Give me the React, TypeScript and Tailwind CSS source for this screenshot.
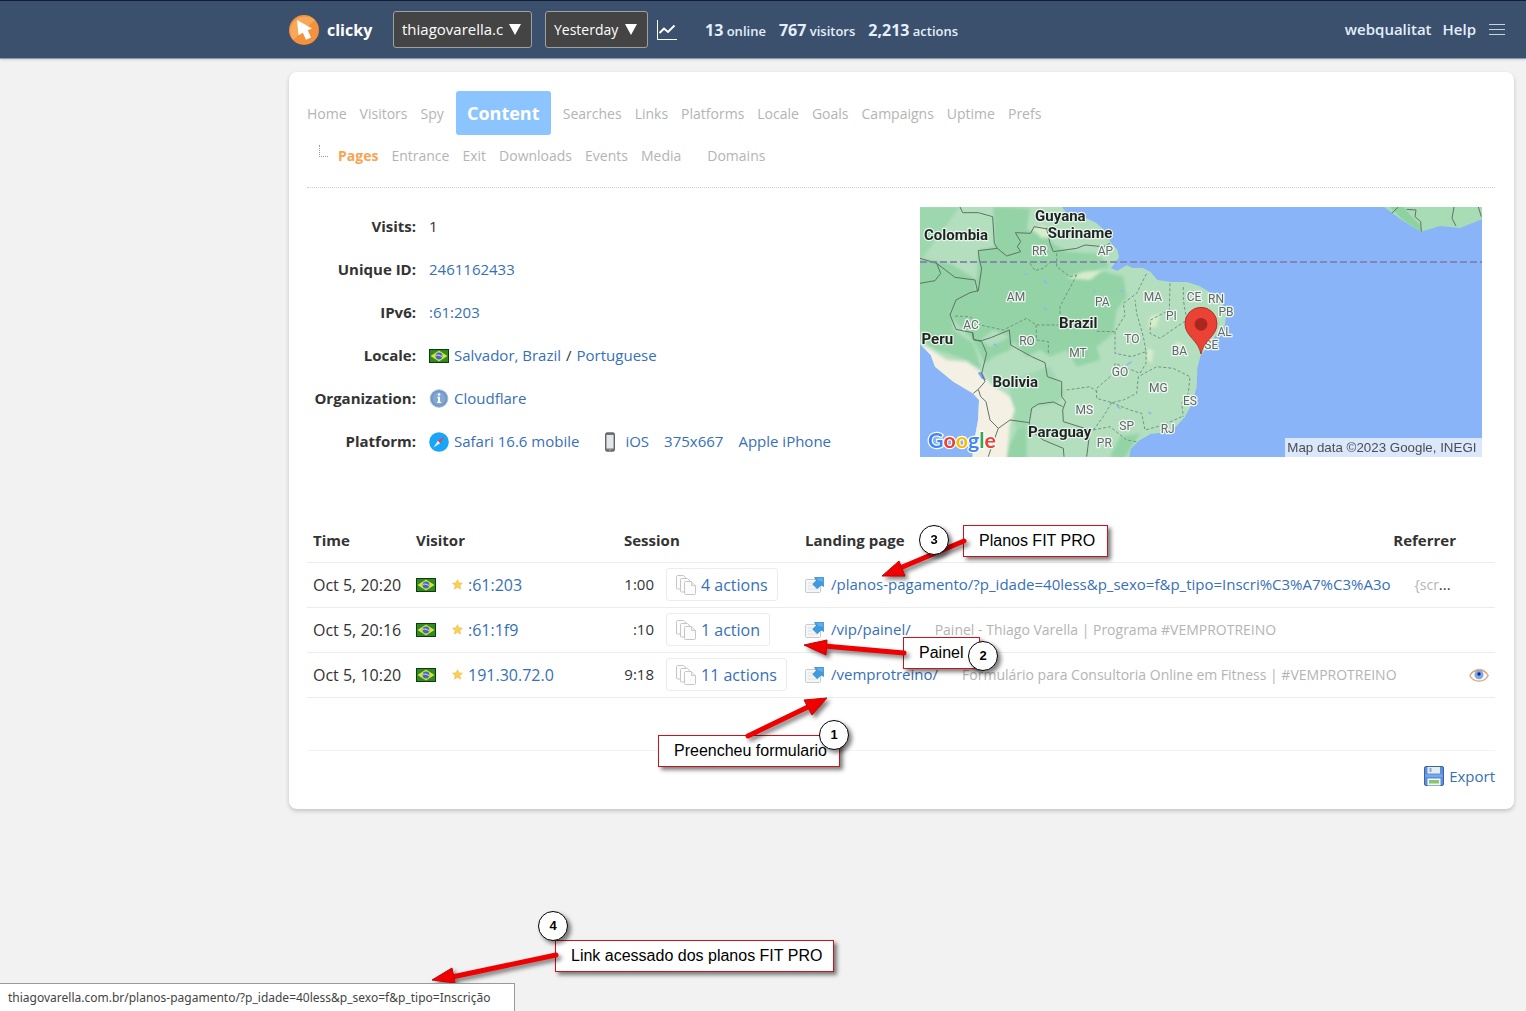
import { ReactNode } from "react";

type Visit = {
    time: string;
    visitor: string;
    session: string;
    actions: string;
    page: string;
    title: string;
    cut?: boolean;
    watched?: boolean;
};

const visits: Visit[] = [
    {
        time: "Oct 5, 20:20",
        visitor: ":61:203",
        session: "1:00",
        actions: "4 actions",
        page: "/planos-pagamento/?p_idade=40less&p_sexo=f&p_tipo=Inscri%C3%A7%C3%A3o",
        title: "{scr",
        cut: true,
    },
    {
        time: "Oct 5, 20:16",
        visitor: ":61:1f9",
        session: ":10",
        actions: "1 action",
        page: "/vip/painel/",
        title: "Painel - Thiago Varella | Programa #VEMPROTREINO",
    },
    {
        time: "Oct 5, 10:20",
        visitor: "191.30.72.0",
        session: "9:18",
        actions: "11 actions",
        page: "/vemprotreino/",
        title: "Formulário para Consultoria Online em Fitness | #VEMPROTREINO",
        watched: true,
    },
];

const tabsAfter = ["Searches", "Links", "Platforms", "Locale", "Goals", "Campaigns", "Uptime", "Prefs"];

const Flag = () => (
    <svg className="h-[14px] w-5 shrink-0" viewBox="0 0 20 14" role="img" aria-label="Brazil">
        <rect width="20" height="14" fill="#0c3d10" />
        <rect x="1" y="1" width="18" height="12" fill="#2f8a22" />
        <path d="M10 1.500 18.500 7 10 12.500 1.500 7Z" fill="#d9e03c" />
        <circle cx="10" cy="7" r="3.400" fill="#4468c8" />
        <path d="M7 6.300c2-.6 4.300 0 6 1.400" stroke="#dbe6f6" strokeWidth="1" fill="none" />
    </svg>
);

const Star = () => (
    <svg className="h-[11px] w-[11px] shrink-0" viewBox="0 0 12 12" aria-hidden="true">
        <path d="M6 .8 7.600 4.200 11.400 4.600 8.600 7.200 9.300 11 6 9.100 2.700 11 3.400 7.200 .6 4.600 4.400 4.200Z" fill="#fbd04e" stroke="#eebc58" strokeWidth=".7" />
    </svg>
);

const PagesIcon = () => (
    <svg className="h-5 w-5 shrink-0" viewBox="0 0 20 20" aria-hidden="true">
        <g fill="#fcfcfc" stroke="#c6c6c6">
            <path d="M.5 1.500q0-1 1-1h6l3 3v9.500q0 1-1 1h-8q-1 0-1-1Z" />
            <path d="M4.500 4.500q0-1 1-1h6l3 3v9.500q0 1-1 1h-8q-1 0-1-1Z" />
            <path d="M8.500 7.500q0-1 1-1h6l4 4v8q0 1-1 1h-9q-1 0-1-1Z" />
        </g>
        <path d="M15.500 6.500v4h4" fill="#eeeeee" stroke="#cecece" />
    </svg>
);

const OpenIcon = () => (
    <svg className="h-4 w-[19px] shrink-0" viewBox="0 0 19 16" aria-hidden="true">
        <rect x=".5" y="2.500" width="15" height="13" rx="1" fill="#f4f6f7" stroke="#c5ccd1" />
        <path d="M3 6h5M3 9h4M3 12h9" stroke="#dce2e6" />
        <path d="M9.500.3H18.700V9.500L16 8 12.300 11.800 7.700 7.300 11.300 3.500Z" fill="#3f9be0" stroke="#2879bd" strokeWidth=".6" />
        <path d="M11.500 1h6.500v4l-5-1.400Z" fill="#5fb0ea" />
    </svg>
);

const EyeIcon = () => (
    <svg className="h-4 w-5" viewBox="0 0 20 16" role="img" aria-label="Watched">
        <path d="M.8 8.500C4.500 2 15 1 19.200 8.500 15.500 16 4.500 16 .8 8.500Z" fill="#fdf8f3" stroke="#d9a37f" strokeWidth="1.300" />
        <path d="M2 6.500C6 1 14 1 18 6" fill="none" stroke="#c8b68a" />
        <circle cx="10" cy="7.800" r="4.500" fill="#7ba9ee" />
        <circle cx="10" cy="7" r="1.700" fill="#1b2c5a" />
    </svg>
);

const SafariIcon = () => (
    <svg className="h-5 w-5 shrink-0" viewBox="0 0 20 20" aria-hidden="true">
        <circle cx="10" cy="10" r="9.800" fill="#17a6fa" />
        <path d="M15.500 4.500 8.800 8.800 11.200 11.200Z" fill="#e8434a" />
        <path d="M4.500 15.500 8.800 8.800 11.200 11.200Z" fill="#e6edf3" />
    </svg>
);

const InfoIcon = () => (
    <svg className="h-5 w-5 shrink-0" viewBox="0 0 20 20" aria-hidden="true">
        <circle cx="10" cy="9.500" r="8.800" fill="#7096c6" stroke="#a9bdd8" />
        <circle cx="10" cy="9.500" r="6.500" fill="#82a7d3" />
        <path d="M8.300 7.800h2.700v5h1.200v1.200H8V12.800h1V9H8.300Z" fill="#ffffff" />
        <circle cx="10" cy="5.500" r="1.300" fill="#ffffff" />
    </svg>
);

const PhoneIcon = () => (
    <svg className="h-5 w-5 shrink-0" viewBox="0 0 20 20" aria-hidden="true">
        <rect x="5.500" y=".8" width="9" height="18.400" rx="1.500" fill="#73777d" stroke="#4c4f54" strokeWidth=".8" />
        <rect x="6.500" y="3" width="7" height="13.500" fill="#e3e7ec" />
        <circle cx="10" cy="17.900" r=".7" fill="#c9cdd2" />
    </svg>
);

const SaveIcon = () => (
    <svg className="h-5 w-5 shrink-0" viewBox="0 0 20 20" aria-hidden="true">
        <rect x=".5" y=".5" width="19" height="19" rx="1.500" fill="#5b8edb" stroke="#3b63a8" />
        <rect x="3.500" y="1" width="12.500" height="6.500" fill="#e6ecf4" />
        <rect x="5.500" y="2" width="2" height="4" fill="#8ea6c8" />
        <rect x="1.500" y="8.500" width="17" height="2.500" fill="#79a7ec" />
        <rect x="3.500" y="12.500" width="13" height="7" fill="#f1f6f0" />
        <rect x="5" y="14" width="10" height="3.500" fill="#8cc36c" />
    </svg>
);

const Logo = () => (
    <svg className="h-[30px] w-[30px]" viewBox="0 0 30 30" aria-hidden="true">
        <circle cx="15" cy="15" r="15" fill="#f3913c" />
        <path d="M4 25A15 15 0 0 1 26 5Z" fill="#f8a85a" />
        <path d="M8 5 23 13.500 18.800 15.300 22 22.500 17 24.800 13.800 17.800 9.500 20.300Z" fill="#ffffff" />
    </svg>
);

const stateLabels: [string, number, number][] = [
    ["RR", 388, 165],
    ["AP", 586, 165],
    ["AM", 318, 303],
    ["PA", 577, 317],
    ["MA", 729, 303],
    ["CE", 852, 303],
    ["RN", 918, 310],
    ["PB", 948, 347],
    ["AL", 944, 408],
    ["SE", 904, 447],
    ["PI", 784, 359],
    ["AC", 183, 386],
    ["RO", 351, 434],
    ["MT", 504, 471],
    ["TO", 666, 430],
    ["BA", 808, 464],
    ["GO", 630, 528],
    ["MG", 745, 576],
    ["ES", 840, 614],
    ["MS", 523, 643],
    ["SP", 650, 690],
    ["RJ", 773, 699],
    ["PR", 583, 741],
];

const countryLabels: [string, number, number][] = [
    ["Guyana", 451, 63],
    ["Suriname", 510, 115],
    ["Colombia", 138, 119],
    ["Brazil", 505, 385],
    ["Peru", 82, 433],
    ["Bolivia", 316, 562],
    ["Paraguay", 449, 711],
];

const VisitMap = () => (
    <svg
        className="mt-[2px] block h-[250px] w-[562px] font-[Roboto,sans-serif]"
        viewBox="30 21 1686 750"
        role="img"
        aria-label="Map of Brazil"
    >
        <defs>
            <clipPath id="land">
                <path d="M0 0H440L470 40 520 50 558 68 585 92 600 125 622 150 627 172 603 205 622 212 650 196 668 204 698 204 722 216 742 240 782 246 830 246 868 258 898 276 925 295 940 318 948 350 944 378 922 400 900 430 886 450 872 466 862 505 860 560 846 612 824 652 798 680 752 698 722 702 686 722 662 748 656 780H186L193 720 204 660 207 600 188 580 130 545 75 500 62 465 30 432 0 420Z" />
            </clipPath>
            <filter id="soft" x="-20%" y="-20%" width="140%" height="140%">
                <feGaussianBlur stdDeviation="5" />
            </filter>
        </defs>
        <rect x="30" y="21" width="1686" height="750" fill="#8ab4f8" />
        <g clipPath="url(#land)">
            <rect width="1000" height="800" fill="#b4dfbf" />
            <g fill="#93d3a5" filter="url(#soft)">
                <path d="M250 20 360 25 350 90 400 100 430 130 470 155 560 160 600 200 560 210 640 230 650 290 620 330 610 400 560 440 570 480 500 500 470 450 420 470 390 450 350 470 300 410 250 390 200 430 120 350 130 290 200 270 205 150 255 140Z" />
                <path d="M0 170 120 190 200 240 190 290 120 330 130 390 190 430 215 510 170 480 80 450 0 400Z" />
                <path d="M180 400 240 440 320 400 300 450 250 470 225 490Z" />
                <path d="M0 20H150L40 170 0 180Z" opacity=".7" />
                <path d="M300 540 420 500 465 580 440 610 370 620 350 680 320 690 300 620Z" opacity=".6" />
                <path d="M630 710 690 700 640 780 600 770Z" />
                <path d="M320 690 350 680 350 780H280Z" />
            </g>
            <path d="M0 430 50 440 110 480 170 485 212 515 240 550 300 590 315 630 300 670 290 780H150V640L0 500Z" fill="#f5f0e4" filter="url(#soft)" />
            <g fill="#d7eccb" filter="url(#soft)">
                <path d="M470 235 520 215 580 210 540 240Z" />
                <path d="M710 445 730 450 725 490 712 480Z" />
                <path d="M795 425 815 430 835 470 800 450Z" />
                <path d="M720 350 750 340 740 380 715 385Z" />
                <path d="M365 85 400 75 430 110 395 115Z" />
            </g>
            <path d="M203 518 215 515 229 540 215 536Z" fill="#7aa4ec" />
            <g stroke="#8abcf0" strokeWidth="5" fill="none">
                <path d="M400 240 412 250M400 322 410 330M650 495 665 485M632 270 640 275M550 270 556 276M620 618 632 626M715 636 724 642M250 432 262 438M345 220 352 224" />
            </g>
        </g>
        <path d="M1422 21 1475 60 1534 95 1590 78 1650 84 1716 58V21Z" fill="#a8dcb5" />
        <path d="M1440 21 1480 60 1534 95 1530 75 1500 45 1480 21Z" fill="#8fd2a2" />
        <g fill="none" stroke="#5d7466" strokeWidth="3" strokeLinejoin="round">
            <path d="M150 21 158 38 205 38 248 50 253 130 262 145 205 152 208 180 215 205 205 272 180 278 138 300 120 345 138 388 188 398 192 420 215 422 245 412 298 390 302 435 365 470 405 488 412 530 455 545 455 590 467 605 458 630 460 665 540 690 530 770" />
            <path d="M262 145 290 168 332 155 322 140 332 125 316 98 362 100 372 80 420 88M410 85 420 130 430 155 500 145 525 135 580 140 600 130" />
            <path d="M30 175 80 190 135 232 195 240 203 275M80 190 92 220 75 242 30 250M188 398 190 418 215 425 230 460 215 520 225 545 205 568 212 590 228 605 240 660 265 685 300 660 358 668 365 625 385 612 430 606 458 620" />
            <path d="M205 568 190 580M265 685 245 740 235 770M358 668 360 690 400 720 460 745 462 770" />
            <path d="M1445 40 1465 21M1490 28 1518 30 1515 50 1532 65 1534 95M1632 21 1626 55 1638 78M1705 21 1714 50" />
        </g>
        <g fill="none" stroke="#729582" strokeWidth="3" strokeDasharray="9 6">
            <path d="M135 348 180 350 210 375 280 390 320 370 350 355 378 375 445 375M378 375 380 420 415 425 415 465M500 225 450 320 450 345M560 394 615 395 645 345 640 310 680 280 710 220M615 395 615 460 665 470 708 455 700 410 680 340 675 300" />
            <path d="M440 160 440 200 480 230 500 225M360 190 375 212 400 205 420 188M780 250 778 330 722 360 720 400 750 415 830 360 820 300 820 255" />
            <path d="M708 455 708 490 690 520 615 490 612 520 560 565 560 595 605 608 640 600 680 580 685 530 740 500 790 505 840 530 835 580 815 610 820 650M470 570 540 560 560 575M605 608 580 650 550 690M605 608 660 630 695 640 705 690 760 675 815 650M550 690 600 680 650 720 680 725" />
        </g>
        <path d="M30 186H1716" stroke="#7f7fae" strokeWidth="6" strokeDasharray="21 9" opacity=".85" />
        <g fontSize="36" textAnchor="middle" fill="#5d6a68" stroke="#eef6ef" strokeWidth="8" strokeLinejoin="round" paintOrder="stroke">
            {stateLabels.map(([name, x, y]) => (
                <text key={name} x={x} y={y}>
                    {name}
                </text>
            ))}
        </g>
        <g fontSize="45" fontWeight="700" textAnchor="middle" fill="#1d2422" stroke="#e7f4ea" strokeWidth="7" strokeLinejoin="round" paintOrder="stroke">
            {countryLabels.map(([name, x, y]) => (
                <text key={name} x={x} y={y}>
                    {name}
                </text>
            ))}
        </g>
        <path d="M873 462C866 420 825 410 825 370A48 48 0 0 1 921 370C921 410 880 420 873 462Z" fill="#ea4335" stroke="#b3312a" strokeWidth="3" />
        <circle cx="873" cy="373" r="19" fill="#a8271f" />
        <text x="54" y="745" fontSize="64" fontFamily="Lato, sans-serif" fontWeight="700" stroke="#ffffff" strokeWidth="7" paintOrder="stroke">
            <tspan fill="#4285f4">G</tspan>
            <tspan fill="#ea4335">o</tspan>
            <tspan fill="#fbbc05">o</tspan>
            <tspan fill="#4285f4">g</tspan>
            <tspan fill="#34a853">l</tspan>
            <tspan fill="#ea4335">e</tspan>
        </text>
        <rect x="1125" y="714" width="591" height="57" fill="#dbe7fb" />
        <text x="1132" y="756" fontSize="40" fontFamily="Liberation Sans, Arial, sans-serif" fill="#4a4d52">
            Map data ©2023 Google, INEGI
        </text>
    </svg>
);

const Info = ({ label, children }: { label: string; children: ReactNode }) => (
    <div className="flex h-[43px] items-center">
        <dt className="w-[109px] text-right font-bold">{label}:</dt>
        <dd className="ml-[13px] flex items-center gap-[5px]">{children}</dd>
    </div>
);

const Anchor = ({ children, className = "" }: { children: ReactNode; className?: string }) => (
    <a href="#" className={`text-[#3670b8] hover:underline ${className}`}>
        {children}
    </a>
);

const NavLink = ({ children }: { children: ReactNode }) => (
    <a href="#" className="text-[#b4b4b4]">
        {children}
    </a>
);

const Callout = ({ className, children }: { className: string; children: ReactNode }) => (
    <div
        className={`absolute flex h-8 items-center border border-[#c4161c] bg-white pl-[15px] text-base whitespace-nowrap text-black shadow-[3px_3px_4px_rgba(0,0,0,0.5)] font-['Liberation_Sans',Arial,sans-serif] ${className}`}
    >
        {children}
    </div>
);

const Step = ({ className, children }: { className: string; children: ReactNode }) => (
    <span
        className={`absolute flex h-[30px] w-[30px] items-center justify-center rounded-full border border-black bg-white text-[13px] font-bold text-black shadow-[3px_3px_4px_rgba(0,0,0,0.5)] font-['Liberation_Sans',Arial,sans-serif] ${className}`}
    >
        {children}
    </span>
);

const Arrow = ({ className, w, h, line, head }: { className: string; w: number; h: number; line: string; head: string }) => (
    <svg
        className={`absolute overflow-visible drop-shadow-[3px_3px_2px_rgba(0,0,0,0.5)] ${className}`}
        width={w}
        height={h}
        viewBox={`0 0 ${w} ${h}`}
        aria-hidden="true"
    >
        <path d={line} stroke="#f00000" strokeWidth="5" strokeLinecap="round" />
        <path d={head} fill="#f00000" stroke="#c80000" strokeWidth="1" />
    </svg>
);

const Stat = ({ value, label }: { value: string; label: string }) => (
    <span>
        <span className="text-[16px] font-bold">{value}</span> {label}
    </span>
);

const Header = () => (
    <header className="flex h-[59px] items-center border-t border-t-[#101c38] border-b border-b-[#8b9ab0] bg-[#3b506d] pr-[21px] pl-[289px] text-white shadow-sm">
        <a href="#" className="flex w-[104px] items-center gap-2 text-[16px] font-bold">
            <Logo />
            clicky
        </a>
        <div className="relative">
            <select aria-label="Site" className="h-[37px] w-[139px] appearance-none rounded-[3px] border border-[#a0a0a0] bg-[#444] pl-2 text-[15px]">
                <option>thiagovarella.c</option>
            </select>
            <span className="pointer-events-none absolute top-[13px] right-[11px] h-[11px] w-3 bg-white [clip-path:polygon(0_0,100%_0,50%_100%)]" />
        </div>
        <div className="relative ml-[13px]">
            <select aria-label="Date" className="h-[37px] w-[103px] appearance-none rounded-[3px] border border-[#a0a0a0] bg-[#444] pl-2 text-[14px]">
                <option>Yesterday</option>
            </select>
            <span className="pointer-events-none absolute top-[13px] right-[11px] h-[11px] w-3 bg-white [clip-path:polygon(0_0,100%_0,50%_100%)]" />
        </div>
        <button type="button" aria-label="Trends" className="ml-2">
            <svg className="h-5 w-[21px]" viewBox="0 0 21 20" fill="none" stroke="#ffffff">
                <path d="M1.500 0v19.500H21" />
                <path d="M3.500 13 8 8.500l4 3.500 6.500-6.500" strokeWidth="2" />
            </svg>
        </button>
        <p className="ml-7 flex gap-[13px] text-[13px] font-semibold whitespace-nowrap text-[#e3effc]">
            <Stat value="13" label="online" />
            <Stat value="767" label="visitors" />
            <Stat value="2,213" label="actions" />
        </p>
        <nav className="ml-auto flex items-center gap-[11px] text-[15px] font-semibold text-[#e3effc]">
            <a href="#">webqualitat</a>
            <a href="#">Help</a>
            <button type="button" aria-label="Menu" className="ml-[2px]">
                <svg className="h-3 w-4" viewBox="0 0 16 12" fill="#c5d3e4">
                    <path d="M0 0h16v1H0zM0 5h16v1H0zM0 10h16v1H0z" />
                </svg>
            </button>
        </nav>
    </header>
);

const VisitTable = () => (
    <table className="mt-[55px] w-full table-fixed text-[16px] text-[#333]">
        <colgroup>
            <col className="w-[103px]" />
            <col className="w-[208px]" />
            <col className="w-[181px]" />
            <col />
            <col className="w-[90px]" />
            <col className="w-[39px]" />
        </colgroup>
        <thead>
            <tr className="h-[44px] border-b border-[#ececec] text-left text-[15px]">
                <th className="pl-[6px] font-bold">Time</th>
                <th className="pl-[6px] font-bold">Visitor</th>
                <th className="pl-[6px] font-bold">Session</th>
                <th className="pl-[6px] font-bold">Landing page</th>
                <th className="text-right font-bold">Referrer</th>
                <td />
            </tr>
        </thead>
        <tbody>
            {visits.map((visit) => (
                <tr key={visit.time} className="h-[45px] border-b border-[#ececec]">
                    <td className="pl-[6px] whitespace-nowrap">{visit.time}</td>
                    <td className="pl-[6px]">
                        <div className="flex items-center">
                            <Flag />
                            <span className="ml-4 flex items-center gap-[5px]">
                                <Star />
                                <Anchor>{visit.visitor}</Anchor>
                            </span>
                        </div>
                    </td>
                    <td>
                        <div className="flex items-center">
                            <span className="w-9 text-right text-[15px]">{visit.session}</span>
                            <a href="#" className="ml-3 flex h-[33px] items-center gap-[5px] rounded-[3px] border border-[#ececec] px-[9px] text-[#3670b8]">
                                <PagesIcon />
                                {visit.actions}
                            </a>
                        </div>
                    </td>
                    <td colSpan={2} className="pl-[6px] text-[15px]">
                        <div className="flex items-center whitespace-nowrap">
                            <OpenIcon />
                            <Anchor className="ml-[7px]">{visit.page}</Anchor>
                            <span className="ml-6 text-[14px] text-[#b4b4b4]">{visit.title}</span>
                            {visit.cut && "..."}
                        </div>
                    </td>
                    <td className="pl-[13px]">{visit.watched && <EyeIcon />}</td>
                </tr>
            ))}
        </tbody>
    </table>
);

export default function App() {
    return (
        <div className="relative min-h-screen overflow-x-hidden bg-[#f2f2f2] font-['Trebuchet_MS','Open_Sans',sans-serif]">
            <Header />

            <main className="mt-[13px] mr-3 ml-[289px] rounded-lg bg-white pt-[19px] pr-[19px] pb-[22px] pl-[18px] shadow-[0_2px_4px_rgba(0,0,0,0.2)]">
                <nav className="flex items-center gap-[13px] text-[14px]">
                    <NavLink>Home</NavLink>
                    <NavLink>Visitors</NavLink>
                    <NavLink>Spy</NavLink>
                    <a href="#" className="-mx-px flex h-[44px] w-[95px] items-center justify-center rounded-[3px] bg-[#8cc4ff] text-[18px] font-bold text-white">
                        Content
                    </a>
                    {tabsAfter.map((tab) => (
                        <NavLink key={tab}>{tab}</NavLink>
                    ))}
                </nav>
                <nav className="flex h-[53px] items-center gap-[13px] border-b border-dotted border-[#cfcfcf] pb-3 pl-3 text-[14px]">
                    <span className="mb-2 h-3 w-[9px] border-b border-l border-dotted border-[#999]" />
                    <a href="#" className="-ml-[3px] font-bold text-[#f9a355]">Pages</a>
                    <NavLink>Entrance</NavLink>
                    <NavLink>Exit</NavLink>
                    <NavLink>Downloads</NavLink>
                    <NavLink>Events</NavLink>
                    <NavLink>Media</NavLink>
                    <a href="#" className="ml-[13px] text-[#b4b4b4]">Domains</a>
                </nav>

                <section className="mt-[17px] flex justify-between pr-[13px]">
                    <dl className="text-[15px] text-[#333]">
                        <Info label="Visits">1</Info>
                        <Info label="Unique ID">
                            <Anchor>2461162433</Anchor>
                        </Info>
                        <Info label="IPv6">
                            <Anchor>:61:203</Anchor>
                        </Info>
                        <Info label="Locale">
                            <Flag />
                            <Anchor>Salvador, Brazil</Anchor>/<Anchor>Portuguese</Anchor>
                        </Info>
                        <Info label="Organization">
                            <InfoIcon />
                            <Anchor>Cloudflare</Anchor>
                        </Info>
                        <Info label="Platform">
                            <SafariIcon />
                            <Anchor>Safari 16.6 mobile</Anchor>
                            <span className="ml-4 flex items-center gap-[5px]">
                                <PhoneIcon />
                                <Anchor>iOS</Anchor>
                            </span>
                            <Anchor className="ml-[10px]">375x667</Anchor>
                            <Anchor className="ml-[10px]">Apple iPhone</Anchor>
                        </Info>
                    </dl>
                    <VisitMap />
                </section>

                <VisitTable />

                <div className="mt-[52px] flex justify-end border-t border-[#f3f3f3] pt-[14px]">
                    <a href="#" className="flex items-center gap-[5px] text-[15px] text-[#3670b8]">
                        <SaveIcon />
                        Export
                    </a>
                </div>
            </main>

            {/* Notes drawn over the page */}
            <Callout className="top-[525px] left-[963px] w-[145px]">Planos FIT PRO</Callout>
            <Arrow className="top-[541px] left-[882px]" w={82} h={36} line="M82 0 18 27" head="M0 35 17 20 23 35Z" />
            <Step className="top-[525px] left-[919px]">3</Step>

            <Callout className="top-[637px] left-[903px] w-[77px]">Painel</Callout>
            <Arrow className="top-[637px] left-[804px]" w={100} h={20} line="M100 16 20 9" head="M0 8 23 3 22 18Z" />
            <Step className="top-[641px] left-[968px]">2</Step>

            <Callout className="top-[735px] left-[658px] w-[182px]">Preencheu formulario</Callout>
            <Arrow className="top-[697px] left-[748px]" w={80} h={40} line="M0 39 62 9" head="M79 1 56 3 64 18Z" />
            <Step className="top-[720px] left-[819px]">1</Step>

            <Callout className="top-[940px] left-[555px] w-[279px]">Link acessado dos planos FIT PRO</Callout>
            <Arrow className="top-[955px] left-[432px]" w={124} h={30} line="M124 0 20 22" head="M0 25 20 13 23 28Z" />
            <Step className="top-[911px] left-[538px]">4</Step>

            <div className="fixed bottom-0 left-0 flex h-7 w-[515px] items-center border-t border-r border-[#9a9a9a] bg-white px-2 font-['Noto_Sans',sans-serif] text-[12px] whitespace-nowrap text-[#444]">
                thiagovarella.com.br/planos-pagamento/?p_idade=40less&p_sexo=f&p_tipo=Inscrição
            </div>
        </div>
    );
}
